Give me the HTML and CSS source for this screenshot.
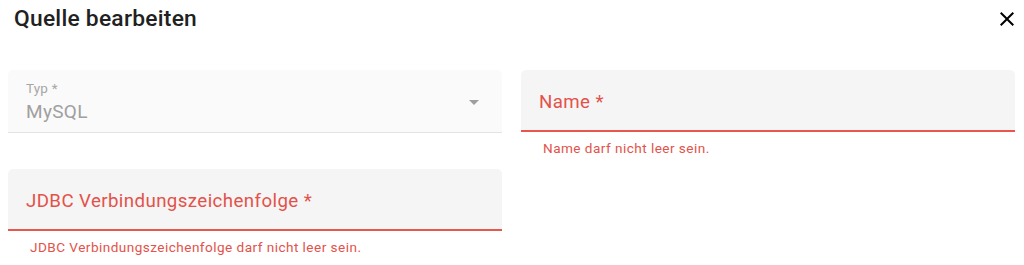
FILE: index.html
```html
<!DOCTYPE html>
<html lang="de">
<head>
<meta charset="utf-8">
<title>Quelle bearbeiten</title>
<link rel="stylesheet" href="styles.css">
</head>
<body>
<div class="dialog">
  <div class="header">
    <h2 class="title">Quelle bearbeiten</h2>
    <button class="close" aria-label="Schließen">
      <svg viewBox="0 0 24 24" width="24" height="24"><path d="M19 6.41 17.59 5 12 10.59 6.41 5 5 6.41 10.59 12 5 17.59 6.41 19 12 13.41 17.59 19 19 17.59 13.41 12z" fill="#000"/></svg>
    </button>
  </div>
  <div class="grid">
    <div class="cell">
      <div class="field disabled">
        <div class="field-text">
          <span class="label-small">Typ *</span>
          <span class="value">MySQL</span>
        </div>
        <svg class="arrow" viewBox="0 0 24 24" width="24" height="24"><path d="M7 10l5 5 5-5z" fill="#9e9e9e"/></svg>
      </div>
    </div>
    <div class="cell">
      <div class="field error">
        <span class="label">Name *</span>
      </div>
      <p class="helper">Name darf nicht leer sein.</p>
    </div>
    <div class="cell">
      <div class="field error">
        <span class="label">JDBC Verbindungszeichenfolge *</span>
      </div>
      <p class="helper">JDBC Verbindungszeichenfolge darf nicht leer sein.</p>
    </div>
  </div>
</div>
</body>
</html>
```
FILE: styles.css
```css
* { box-sizing: border-box; }
html, body { margin: 0; padding: 0; background: #fff; }
body { font-family: Roboto, "Noto Sans", Arial, sans-serif; }
.dialog { width: 1024px; }
.header {
  display: flex;
  align-items: center;
  justify-content: space-between;
  height: 37px;
  padding: 0 5px 0 14px;
}
.title {
  margin: 0;
  font-size: 22.8px;
  font-weight: 500;
  color: #212121;
  letter-spacing: 0.25px;
}
.close {
  border: 0;
  background: none;
  padding: 0;
  width: 24px;
  height: 24px;
  display: flex;
  cursor: pointer;
}
.grid {
  display: grid;
  grid-template-columns: 494px 494px;
  column-gap: 19px;
  grid-auto-rows: 99px;
  padding: 33px 9px 0 8px;
}
.field {
  height: 63px;
  border-radius: 5px 5px 0 0;
  display: flex;
  align-items: center;
  padding: 0 18px;
}
.field.disabled {
  background: #fafafa;
  border-bottom: 1px solid #e3e3e3;
  justify-content: space-between;
  padding-right: 16px;
}
.field.error {
  background: #f5f5f5;
  height: 62px;
  padding-top: 3px;
  border-bottom: 2px solid #e8574d;
}
.field-text { display: flex; flex-direction: column; padding-top: 1px; }
.label-small {
  font-size: 13.5px;
  color: #a6a6a6;
  line-height: 16px;
  letter-spacing: 0.2px;
}
.value {
  margin-top: 4px;
  font-size: 19px;
  color: #a0a0a0;
  line-height: 24px;
  letter-spacing: 0.3px;
}
.label {
  font-size: 18.7px;
  color: #e3524a;
  letter-spacing: 0.4px;
}
.arrow { margin-top: 1px; }
.helper {
  margin: 8px 0 0 22px;
  font-size: 13.6px;
  line-height: 16px;
  color: #e3524a;
  letter-spacing: 0.45px;
}
```
